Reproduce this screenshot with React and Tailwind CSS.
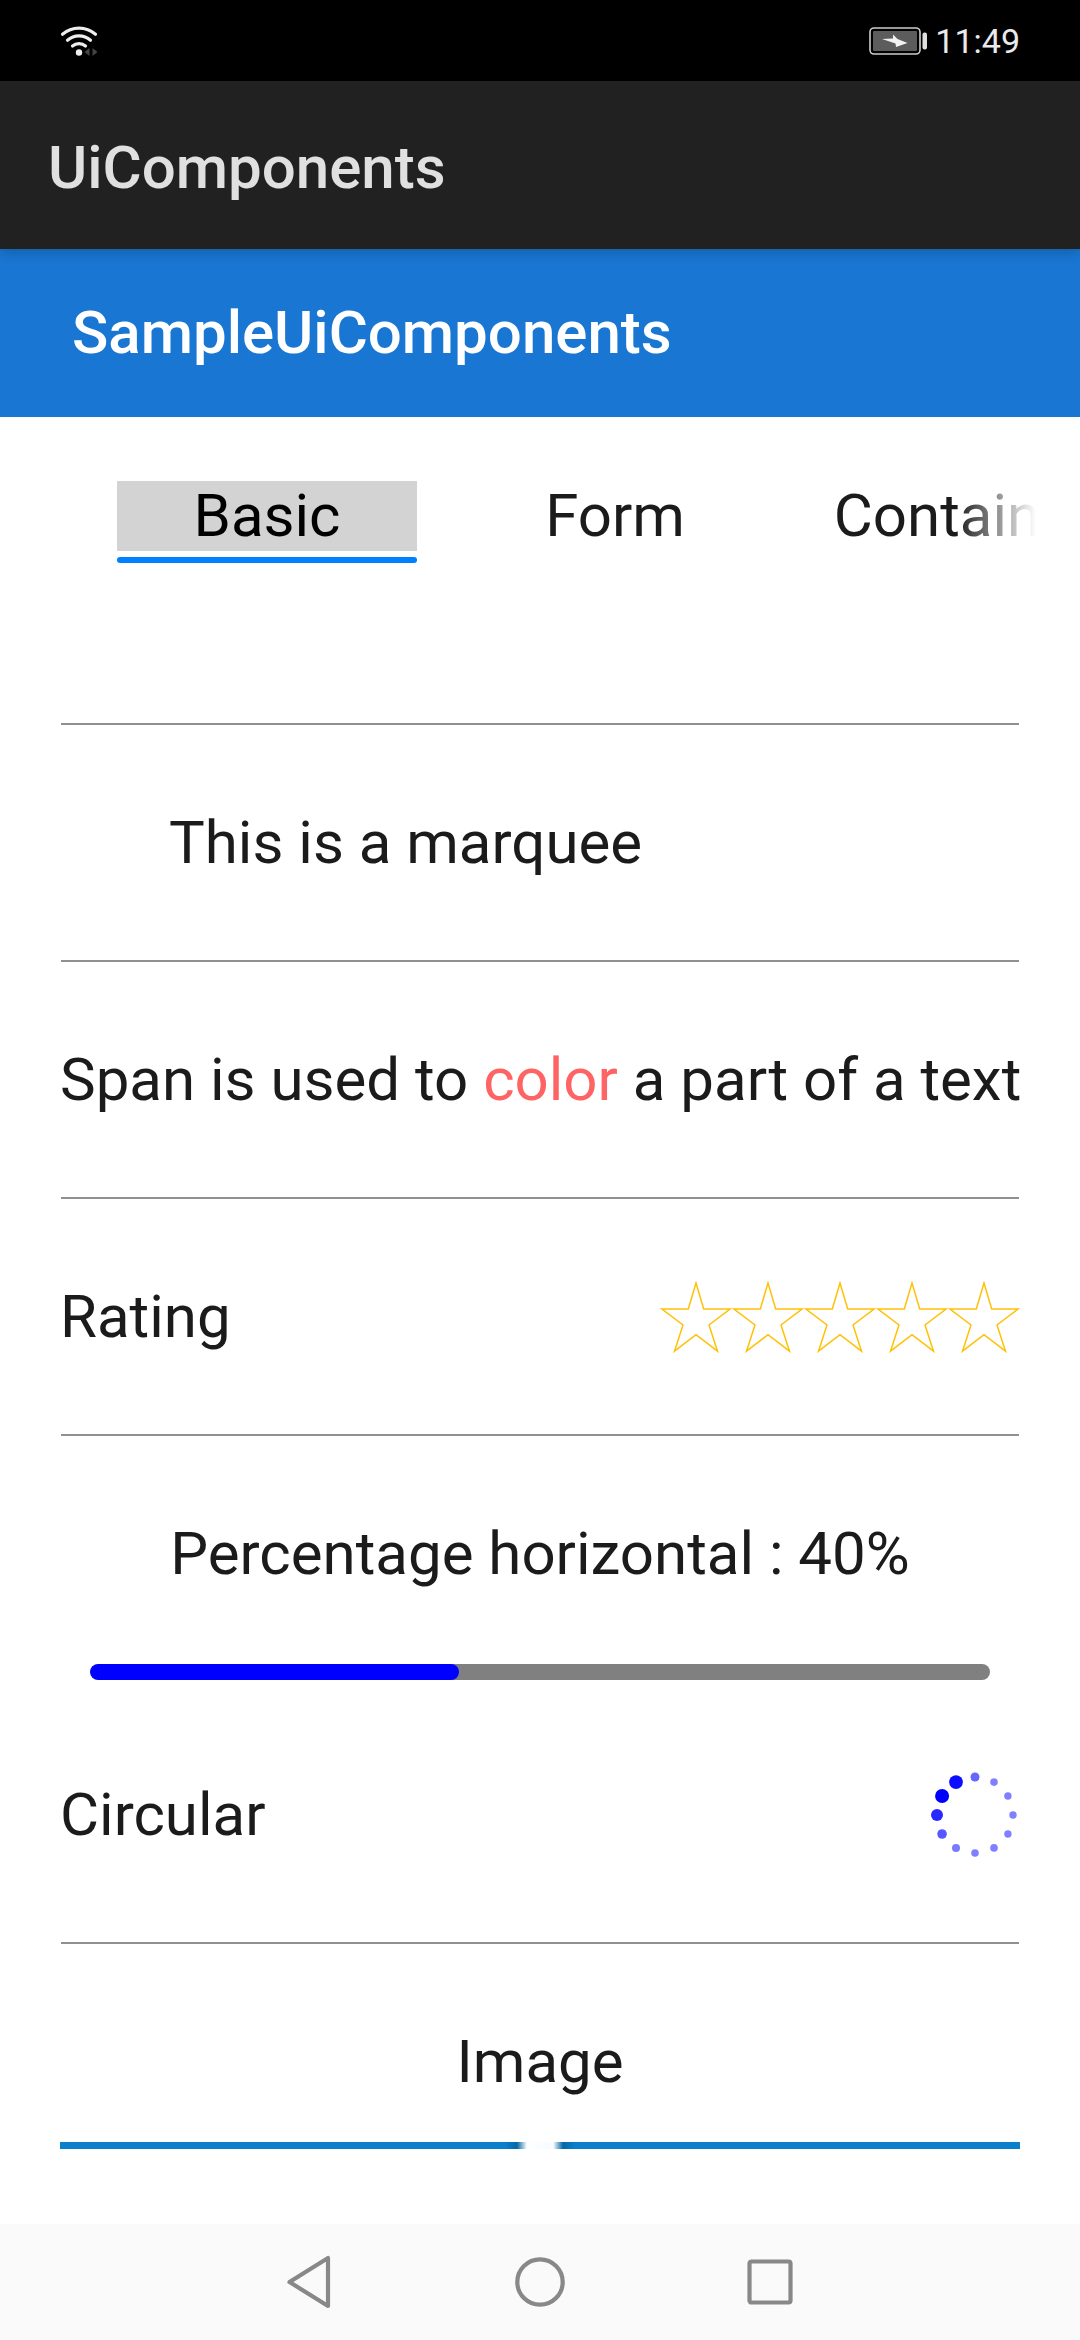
import { useState } from "react";

const tabs = ["Basic", "Form", "Container"];

// Radius and opacity of each dot, clockwise from the top.
const dots = [
  { r: 4.5, o: 0.6 },
  { r: 3.8, o: 0.5 },
  { r: 3.7, o: 0.5 },
  { r: 3.7, o: 0.5 },
  { r: 3.7, o: 0.5 },
  { r: 3.8, o: 0.5 },
  { r: 3.8, o: 0.5 },
  { r: 4, o: 0.52 },
  { r: 4.8, o: 0.66 },
  { r: 6, o: 0.84 },
  { r: 7, o: 1 },
  { r: 6.9, o: 0.95 },
];

function WifiIcon() {
  return (
    <svg width="40" height="32" viewBox="0 0 40 32" fill="none" stroke="#eee" strokeWidth="3.2" strokeLinecap="round">
      <path d="M2.5 9.3a25 25 0 0 1 33 0" />
      <path d="M7.5 15.2a17.500 17.500 0 0 1 23 0" />
      <path d="M12.500 21a10 10 0 0 1 13 0" />
      <circle cx="19" cy="27.500" r="3.200" fill="#eee" stroke="none" />
      <path d="M29.500 23v8l-5-4zM32.500 23v8l5-4z" fill="#444" stroke="none" />
    </svg>
  );
}

function BatteryIcon() {
  return (
    <svg width="60" height="28" viewBox="0 0 60 28">
      <rect x="1" y="1" width="50" height="26" rx="4" fill="none" stroke="#ccc" strokeWidth="1.600" />
      <rect x="4" y="4" width="44" height="20" rx="1" fill="#5c5c5c" />
      <path d="M24 7.500l4.500 4.500 10 4-11.500 4-.5-3.500L13 12l11-.5z" fill="#f2f2f2" />
      <rect x="53.500" y="5.500" width="4.500" height="17" rx="2" fill="#e0e0e0" />
    </svg>
  );
}

function Spinner() {
  return (
    <svg role="progressbar" aria-label="Circular" width="90" height="90" viewBox="0 0 90 90" fill="#00f">
      {dots.map((d, i) => {
        const a = (i * Math.PI) / 6;
        return <circle key={i} cx={45 + 38 * Math.sin(a)} cy={45 - 38 * Math.cos(a)} r={d.r} opacity={d.o} />;
      })}
    </svg>
  );
}

function Rating() {
  const [value, setValue] = useState(0);
  return (
    <div role="radiogroup" aria-label="Rating" className="flex">
      {[1, 2, 3, 4, 5].map((n) => (
        <label key={n} className="size-[72px] cursor-pointer">
          <input
            type="radio"
            name="rating"
            aria-label={`${n} stars`}
            checked={value === n}
            onChange={() => setValue(n)}
            className="sr-only"
          />
          <svg viewBox="0 0 72 72" className="size-full" fill={value >= n ? "#ffc107" : "none"} stroke="#ffc107" strokeWidth="1.500">
            <path d="M36 2l7.700 26H70L49 44l8.500 26.200L36 53.700 14.500 70.200 23 44 2 28h26.300z" />
          </svg>
        </label>
      ))}
    </div>
  );
}

function Row({ children, className = "" }) {
  return <div className={`flex items-center py-[82px] leading-[71px] ${className}`}>{children}</div>;
}

function Divider() {
  return <hr className="mx-px h-[2px] border-0 bg-[#909090]" />;
}

export default function App() {
  const [active, setActive] = useState("Basic");
  const percent = 41;
  return (
    <div className="flex min-h-screen flex-col overflow-hidden bg-white font-[Roboto,sans-serif] text-[60px] text-[#1b1b1b]">
      <div className="flex h-[81px] items-center justify-between bg-black px-[60px]">
        <WifiIcon />
        <div className="flex items-center gap-[6px] text-[34px] leading-10 text-[#eaeaea]">
          <BatteryIcon />
          <span>11:49</span>
        </div>
      </div>

      <header className="z-10 flex h-[168px] items-center bg-[#212121] px-12 pt-[6px] shadow-[0_2px_12px_rgba(0,0,0,0.25)]">
        <h1 className="font-medium leading-[70px] text-[#e0e0e0]">UiComponents</h1>
      </header>
      <div className="flex h-[168px] items-center bg-[#1976d2] px-[72px]">
        <h2 className="font-medium leading-[70px] text-white">SampleUiComponents</h2>
      </div>

      <main className="flex-1">
        <div
          role="tablist"
          className="mr-11 ml-10 flex gap-12 overflow-hidden pt-16 pb-40 pl-[77px] [mask-image:linear-gradient(to_right,black_calc(100%-80px),transparent)]"
        >
          {tabs.map((t) => (
            <button
              key={t}
              type="button"
              role="tab"
              aria-selected={active === t}
              onClick={() => setActive(t)}
              className="group flex w-[300px] shrink-0 flex-col gap-[6px] text-center leading-[70px]"
            >
              <span className="w-full group-aria-selected:bg-[#d3d3d3] group-aria-selected:text-black">{t}</span>
              <span className="h-[6px] w-full rounded-full group-aria-selected:bg-[#007fff]" />
            </button>
          ))}
        </div>

        <div className="px-[60px]">
          <Divider />
          <Row className="px-[109px]">This is a marquee</Row>
          <Divider />
          <Row className="whitespace-pre">
            <p>
              Span is used to <span className="text-[#ff6464]">color</span> a part of a text
            </p>
          </Row>
          <Divider />
          <div className="flex h-[235px] items-center justify-between">
            <span>Rating</span>
            <Rating />
          </div>
          <Divider />
          <div className="pt-[82px] text-center leading-[71px]" id="percent-label">
            Percentage horizontal : 40%
          </div>
          <div
            role="progressbar"
            aria-labelledby="percent-label"
            aria-valuenow={40}
            className="mx-[30px] mt-[75px] h-4 overflow-hidden rounded-full bg-[#808080]"
          >
            <div className="h-full rounded-full bg-[#0000ff]" style={{ width: `${percent}%` }} />
          </div>
          <div className="flex items-center justify-between pt-[90px] pb-[82px]">
            <span>Circular</span>
            <Spinner />
          </div>
          <Divider />
          <div className="pt-[82px] text-center leading-[71px]">Image</div>
          <div
            role="img"
            aria-label="Image"
            className="mt-[45px] h-[7px] bg-[linear-gradient(to_right,#0a80cc_0_calc(50%-35px),#0468a8_calc(50%-23px),#ffffff_calc(50%-13px),#f5fcff_calc(50%+10px),#ffffff_calc(50%+13px),#0468a8_calc(50%+23px),#0a80cc_calc(50%+35px))]"
          />
        </div>
      </main>

      <nav className="flex h-[116px] items-center justify-center bg-[#fafafa]">
        <button type="button" aria-label="Back" className="flex w-[230px] justify-center">
          <svg width="60" height="60" viewBox="0 0 60 60" fill="none" stroke="#888" strokeWidth="4.200" strokeLinejoin="round">
            <path d="M48 6v48L9.500 30z" />
          </svg>
        </button>
        <button type="button" aria-label="Home" className="flex w-[230px] justify-center">
          <svg width="60" height="60" viewBox="0 0 60 60" fill="none" stroke="#888" strokeWidth="4.200">
            <circle cx="30" cy="30" r="22.700" />
          </svg>
        </button>
        <button type="button" aria-label="Recents" className="flex w-[230px] justify-center">
          <svg width="60" height="60" viewBox="0 0 60 60" fill="none" stroke="#888" strokeWidth="4.200">
            <rect x="9.500" y="9.500" width="41" height="41" rx="2" />
          </svg>
        </button>
      </nav>
    </div>
  );
}
